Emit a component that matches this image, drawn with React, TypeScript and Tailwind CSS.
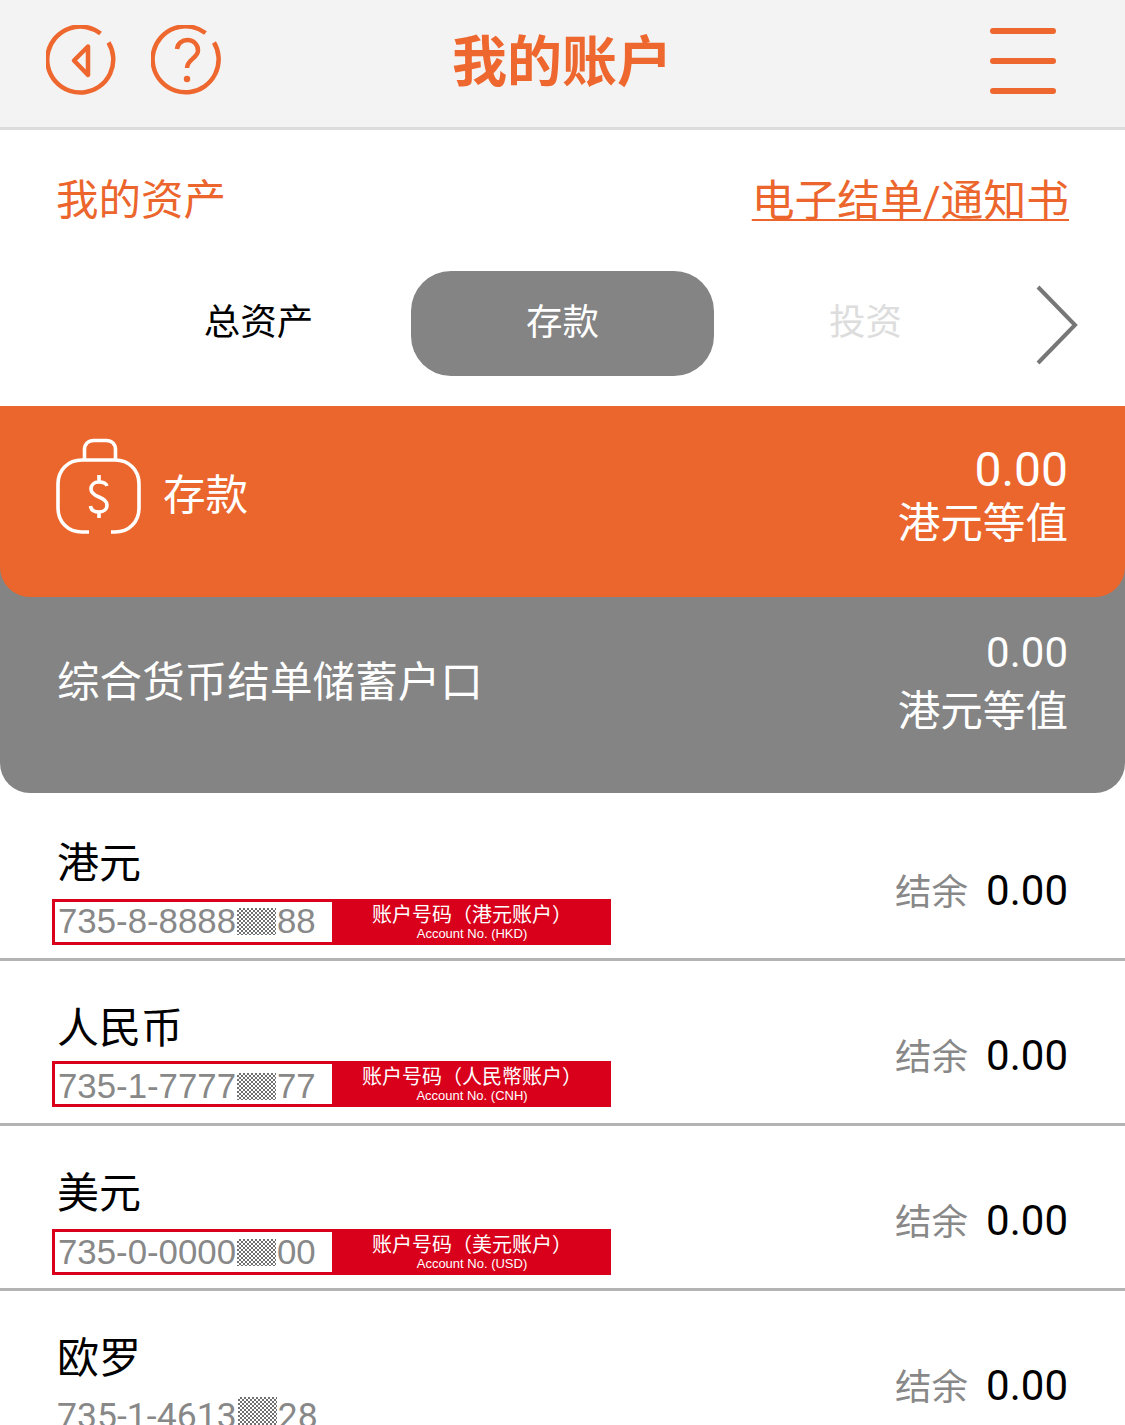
const cjk = "font-['Roboto','Noto_Sans_CJK_SC',sans-serif]";

const rows = [
  {
    name: "港元",
    pre: "735-8-8888",
    post: "88",
    zh: "账户号码（港元账户）",
    en: "Account No. (HKD)",
    rowCls: "h-[168px] pt-[46px]",
    boxCls: "mt-[10px]",
    numCls: "pb-[2px]",
  },
  {
    name: "人民币",
    pre: "735-1-7777",
    post: "77",
    zh: "账户号码（人民幣账户）",
    en: "Account No. (CNH)",
    rowCls: "h-[165px] pt-[43px]",
    boxCls: "mt-[7px]",
    numCls: "pt-[4px]",
  },
  {
    name: "美元",
    pre: "735-0-0000",
    post: "00",
    zh: "账户号码（美元账户）",
    en: "Account No. (USD)",
    rowCls: "h-[165px] pt-[43px]",
    boxCls: "mt-[10px]",
    numCls: "",
  },
];

function Mask({ h }: { h: string }) {
  return (
    <span
      className={`inline-block w-[39px] ${h} mx-[1px] bg-[repeating-conic-gradient(#707070_0_25%,#ffffff_0_50%)] bg-[length:4px_4px]`}
    />
  );
}

function BackIcon() {
  return (
    <svg width="72" height="72" viewBox="44 24 72 72" fill="none" stroke="#ee672e" strokeWidth="4.5" strokeLinejoin="round" strokeLinecap="butt">
      <path d="M98.5 32.5A33 33 0 1 0 106.5 41.5" />
      <path d="M86 45.5L72 59.5L86 74Z" />
    </svg>
  );
}

function HelpIcon() {
  return (
    <svg width="72" height="72" viewBox="149 24 72 72" fill="none" stroke="#ee672e" strokeWidth="4.5" strokeLinecap="butt">
      <path d="M203.5 32A33 33 0 1 0 212 41.5" />
      <path d="M175 48C175.5 42.5 180 39 185.5 39C191.5 39 196 43.5 196 49.5C196 57 185 58.5 185 67" />
      <circle cx="185" cy="78" r="3.2" fill="#ee672e" stroke="none" />
    </svg>
  );
}

function BagIcon() {
  return (
    <svg className="mb-[20px]" width="87" height="98" viewBox="55 438 87 98" fill="none" stroke="#ffffff" strokeWidth="3.6">
      <path d="M89 533H82C68 533 58 523 58 509V485C58 471 68 461 82 461H115C129 461 139 471 139 485V509C139 523 129 533 115 533H111" />
      <path d="M84.5 460V451C84.5 445 88 441.500 94 441.500H106C112 441.500 115.500 445 115.500 451V460" />
      <path d="M107 487C106 484 103 483 99 483C94 483 91 486 91 490C91 494 94 496 99 498C104 500 107 502 107 506C107 510 104 513 99 513C94 513 91 511 90.500 507" />
      <path d="M99 476V483M99 513V519" />
    </svg>
  );
}

function Balance() {
  return (
    <div className="pt-[24px] flex items-center gap-[18px] h-fit">
      <span className="mt-[5px] text-[36.5px] leading-[50px] text-[#888888]">结余</span>
      <span className="text-[42px] leading-[50px] text-black">0.00</span>
    </div>
  );
}

export default function App() {
  return (
    <div className={`w-[1125px] h-[1425px] overflow-hidden bg-white ${cjk}`}>
      {/* header */}
      <div className="h-[130px] pb-[5px] bg-[#f3f3f3] border-b-[3px] border-[#dcdcdc] flex items-center pl-[46px] pr-[69px]">
        <div className="w-[406px] flex items-center gap-[33px]">
          <BackIcon />
          <HelpIcon />
        </div>
        <div className="pt-[2px] text-[55px] leading-[60px] font-bold text-[#ee672e]">我的账户</div>
        <div className="ml-auto flex flex-col gap-[24px]">
          <div className="w-[66px] h-[6px] rounded-full bg-[#ee672e]" />
          <div className="w-[66px] h-[6px] rounded-full bg-[#ee672e]" />
          <div className="w-[66px] h-[6px] rounded-full bg-[#ee672e]" />
        </div>
      </div>

      <div className="flex justify-between pt-[46px] pl-[56px] pr-[56px] text-[42.5px] leading-[50px] text-[#eb652c]">
        <span>我的资产</span>
        <span className="text-[42.8px] underline underline-offset-[3px] decoration-[2px]">电子结单/通知书</span>
      </div>

      {/* tabs */}
      <div className="mt-[45px] flex items-center pl-[107px]">
        <div className="w-[303px] text-center text-[36.5px] text-black">总资产</div>
        <div className="ml-[1px] w-[303px] h-[105px] rounded-[40px] bg-[#848484] flex items-center justify-center text-[36.5px] text-white">
          存款
        </div>
        <div className="w-[303px] text-center text-[36.5px] text-[#dddddd]">投资</div>
        <svg className="ml-[19px] mt-[3px]" width="42" height="80" viewBox="0 0 42 80" fill="none" stroke="#777777" strokeWidth="4">
          <path d="M2 2L39 40L2 78" />
        </svg>
      </div>

      {/* summary cards */}
      <div className="relative z-10 mt-[30px] h-[191px] pb-[11px] bg-[#eb662c] rounded-b-[30px] flex items-center justify-between pl-[55px] pr-[57px] text-white">
        <div className="flex items-center gap-[21px]">
          <BagIcon />
          <span className="text-[42.6px]">存款</span>
        </div>
        <div className="text-right">
          <div className="text-[48px] leading-[54px]">0.00</div>
          <div className="text-[42.6px] leading-[52px]">港元等值</div>
        </div>
      </div>
      <div className="-mt-[30px] h-[226px] pt-[6px] bg-[#848484] rounded-b-[30px] flex items-center justify-between pl-[57px] pr-[57px] text-white">
        <span className="text-[42.6px]">综合货币结单储蓄户口</span>
        <div className="text-right pt-[4px]">
          <div className="text-[42px] leading-[52px]">0.00</div>
          <div className="text-[42.6px] leading-[64px]">港元等值</div>
        </div>
      </div>

      {/* accounts */}
      {rows.map((r) => (
        <div key={r.name} className={`${r.rowCls} border-b-[3px] border-[#b3b3b3] flex justify-between pr-[57px]`}>
          <div>
            <div className="pl-[57px] text-[42px] leading-[50px] text-black">{r.name}</div>
            <div className={`${r.boxCls} ml-[52px] w-[559px] h-[46px] border-[3px] border-[#d9001b] flex`}>
              <div className={`${r.numCls} w-[277px] pl-[3px] flex items-center text-[#888888] text-[34.8px] leading-[40px] font-['Liberation_Sans',sans-serif]`}>
                {r.pre}
                <Mask h="h-[27px]" />
                {r.post}
              </div>
              <div className="flex-1 pl-[4px] bg-[#d9001b] text-white text-center">
                <div className="text-[20px] leading-[22px] mt-[2px] whitespace-nowrap">{r.zh}</div>
                <div className="text-[13px] leading-[15px] font-['Liberation_Sans',sans-serif]">{r.en}</div>
              </div>
            </div>
          </div>
          <Balance />
        </div>
      ))}
      <div className="flex justify-between pr-[57px] pt-[43px]">
        <div>
          <div className="pl-[57px] text-[42px] leading-[50px] text-black">欧罗</div>
          <div className="mt-[9px] pl-[57px] h-[46px] flex items-center text-[#888888] text-[35.6px] leading-[40px]">
            735-1-4613
            <Mask h="h-[28px] -mt-[10px]" />
            28
          </div>
        </div>
        <Balance />
      </div>
    </div>
  );
}
